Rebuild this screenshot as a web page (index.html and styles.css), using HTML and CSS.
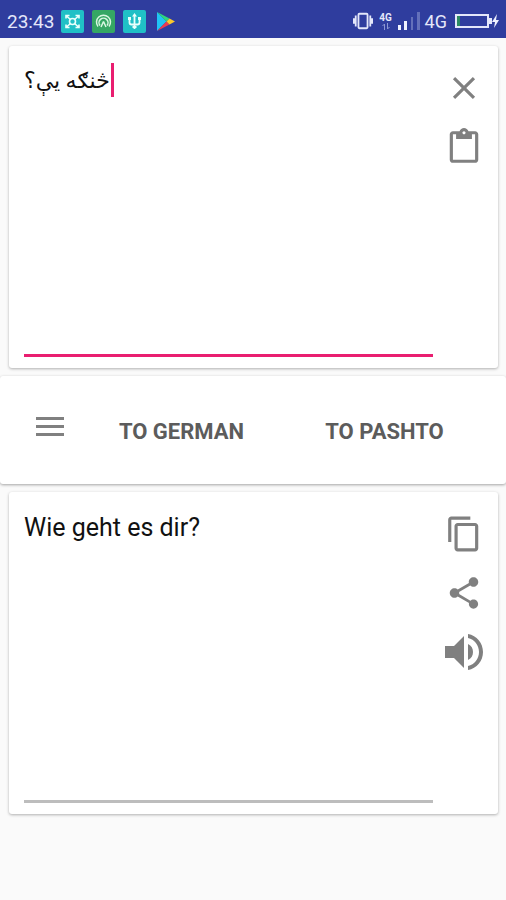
FILE: index.html
```html
<!DOCTYPE html>
<html lang="en">
<head>
    <meta charset="utf-8">
    <meta name="viewport" content="width=device-width, initial-scale=1">
    <title>Pashto German Translator</title>
    <link rel="stylesheet" href="styles.css">
</head>
<body>
<!-- status bar -->
<header class="status">
    <span class="clock">23:43</span>
    <div class="notices">
        <svg width="23" height="23" viewBox="0 0 23 23" fill="none" stroke="#e9fffc" stroke-width="1.6">
            <rect width="23" height="23" rx="2" fill="#20c0c6" stroke="none"/>
            <circle cx="11.5" cy="11.5" r="3"/>
            <path d="M5 8.500V5.500h3.500M18 8.500V5.500h-3.500M5 14.500v3h3.500M18 14.500v3h-3.500M6 6.500l3.500 3M17 6.500l-3.500 3M6 16.500l3.500-3M17 16.500l-3.500-3"/>
        </svg>
        <svg width="23" height="23" viewBox="0 0 23 23" fill="none" stroke="#d9f7e2" stroke-width="1.5">
            <rect width="23" height="23" rx="2" fill="#35a764" stroke="none"/>
            <path d="M6 16.500a7 7 0 1 1 11 0M8 15.500a4.500 4.500 0 1 1 7 0"/>
            <path d="M11.500 11.500l-2.500 5.500M11.500 11.500l2.500 5.500"/>
        </svg>
        <svg width="23" height="23" viewBox="0 0 23 23" fill="none" stroke="#e9fffc" stroke-width="1.8">
            <rect width="23" height="23" rx="2" fill="#20c0c6" stroke="none"/>
            <path d="M11.500 5v14M6.500 8v4.500q0 2 2 2h6q2 0 2-2V8"/>
            <path d="M11.500 3l2.500 3.500H9zM5 7h3v3H5zM15 7h3v3h-3zM9.500 16h4v2h-4z" fill="#e9fffc" stroke="none"/>
        </svg>
        <svg width="23" height="23" viewBox="0 0 23 23">
            <path d="M3 2v19l9.500-9.500z" fill="#20c4f4"/>
            <path d="M3 2l12.500 6.500-3 3z" fill="#2fd67c"/>
            <path d="M3 21l12.500-6.500-3-3z" fill="#ee3b4d"/>
            <path d="M15.500 8.500l5.500 3-5.500 3-3-3z" fill="#fbc92d"/>
        </svg>
    </div>
    <div class="signals">
        <svg width="22" height="20" viewBox="0 0 24 22" fill="none" stroke="#e4e7fa" stroke-width="2">
            <rect x="7" y="3" width="10" height="16" rx="1"/>
            <path d="M4 5v12M20 5v12M2 8v6M22 8v6"/>
        </svg>
        <span class="data">
            4G
            <svg width="10" height="7" viewBox="0 0 10 7" fill="none" stroke="#8d97d3">
                <path d="M3.500 7V1L1.500 3M6.500 0v6l2-2"/>
            </svg>
        </span>
        <svg width="23" height="22" viewBox="0 0 23 22">
            <path d="M0 15h3v5H0zM6 11h3v9H6z" fill="#f0f2ff"/>
            <path d="M13 7h2v13h-2zM19 2h3v18h-3z" fill="#6470ba"/>
        </svg>
        <span class="network">4G</span>
        <svg class="battery" width="45" height="20" viewBox="0 0 45 20">
            <rect x="1" y="4" width="32" height="12" fill="none" stroke="#e4e7fa" stroke-width="2"/>
            <path d="M34 7h3v6h-3z" fill="#e4e7fa"/>
            <path d="M2 5h3v10H2z" fill="#2c8a63"/>
            <path d="M42 3l-5 8h3l-1 6 5-8h-3z" fill="#f0f2ff"/>
        </svg>
    </div>
</header>

<main>
    <!-- text to translate -->
    <section class="card">
        <div class="field">
            <textarea class="text source" dir="rtl" lang="ps" aria-label="Text to translate" spellcheck="false">څنګه يې؟</textarea>
            <span class="caret"></span>
        </div>
        <div class="tools">
            <button class="tool" aria-label="Clear">
                <svg viewBox="0 0 24 24"><path d="M19 6.410L17.590 5 12 10.590 6.410 5 5 6.410 10.590 12 5 17.590 6.410 19 12 13.410 17.590 19 19 17.590 13.410 12z"/></svg>
            </button>
            <button class="tool" aria-label="Paste">
                <svg viewBox="0 0 24 24"><path d="M19 2h-4.180C14.400.84 13.300 0 12 0c-1.300 0-2.400.84-2.820 2H5c-1.100 0-2 .9-2 2v16c0 1.100.9 2 2 2h14c1.100 0 2-.9 2-2V4c0-1.100-.9-2-2-2zm-7 0c.55 0 1 .45 1 1s-.45 1-1 1-1-.45-1-1 .45-1 1-1zm7 18H5V4h2v3h10V4h2v16z"/></svg>
            </button>
        </div>
    </section>

    <nav class="bar">
        <button class="menu" aria-label="Menu">
            <svg width="28" height="26" viewBox="0 0 28 26"><path d="M0 1h28v3H0zM0 9h28v3H0zM0 17h28v3H0z"/></svg>
        </button>
        <button class="lang">TO GERMAN</button>
        <button class="lang">TO PASHTO</button>
    </nav>

    <!-- translation -->
    <section class="card">
        <div class="field">
            <textarea class="text result" lang="de" aria-label="Translation" spellcheck="false" readonly>Wie geht es dir?</textarea>
        </div>
        <div class="tools">
            <button class="tool" aria-label="Copy">
                <svg viewBox="0 0 24 24"><path d="M16 1H4c-1.100 0-2 .9-2 2v14h2V3h12V1zm3 4H8c-1.100 0-2 .9-2 2v14c0 1.100.9 2 2 2h11c1.100 0 2-.9 2-2V7c0-1.100-.9-2-2-2zm0 16H8V7h11v14z"/></svg>
            </button>
            <button class="tool" aria-label="Share">
                <svg viewBox="0 0 24 24"><path d="M18 16.080c-.76 0-1.440.3-1.960.77L8.910 12.700c.05-.23.09-.46.09-.7s-.04-.47-.09-.7l7.050-4.110c.54.5 1.250.81 2.040.81 1.660 0 3-1.340 3-3s-1.340-3-3-3-3 1.340-3 3c0 .24.04.47.09.7L8.040 9.810C7.500 9.310 6.790 9 6 9c-1.660 0-3 1.340-3 3s1.340 3 3 3c.79 0 1.500-.31 2.040-.81l7.120 4.160c-.05.21-.08.43-.08.65 0 1.610 1.310 2.920 2.920 2.920s2.920-1.310 2.920-2.920-1.310-2.920-2.920-2.920z"/></svg>
            </button>
            <button class="tool" aria-label="Listen">
                <svg viewBox="0 0 38 38"><path d="M0 13v12h9l10 10V3L9 13zM23 11v16c3.500-1.500 5-4.500 5-8s-1.500-6.500-5-8zM23 1v4c6.500 1.500 11 7.200 11 14s-4.500 12.500-11 14v4c8.800-1.600 15-9 15-18S31.800 2.600 23 1z"/></svg>
            </button>
        </div>
    </section>
</main>
</body>
</html>
```
FILE: styles.css
```css
body {
    margin: 0;
    background: #fafafa;
    font-family: Roboto, sans-serif;
}
button {
    padding: 0;
    border: none;
    background: none;
    font-family: inherit;
}
.status {
    display: flex;
    align-items: center;
    height: 38px;
    padding: 4px 6px 0 7px;
    box-sizing: border-box;
    background: #2f3d9e;
    color: #e4e7fa;
    font-size: 19px;
}
.notices {
    display: flex;
    gap: 8px;
    margin-left: 7px;
}
.signals {
    display: flex;
    align-items: center;
    gap: 4px;
    margin-left: auto;
}
.data {
    display: flex;
    flex-direction: column;
    align-items: center;
    width: 16px;
    font-size: 10px;
    font-weight: bold;
    line-height: 10px;
}
.network {
    font-size: 18px;
}
.battery {
    margin-left: 4px;
}
main {
    display: flex;
    flex-direction: column;
    gap: 8px;
    padding: 8px 0;
}
.card {
    display: flex;
    min-height: 322px;
    margin: 0 8px 0 9px;
    background: #fff;
    border-radius: 3px;
    box-shadow: 0 1px 3px rgba(0, 0, 0, .3);
}
.field {
    position: relative;
    display: flex;
    flex: 1;
    margin: 16px 0 11px 15px;
}
.text {
    flex: 1;
    min-width: 0;
    padding: 4px 0;
    box-sizing: border-box;
    border: none;
    border-bottom: 3px solid #bdbdbd;
    outline: none;
    resize: none;
    background: none;
    color: #111;
    font-family: Roboto, "DejaVu Sans", sans-serif;
    font-size: 25px;
    line-height: 32px;
    text-align: left;
}
.source {
    border-color: #e91e70;
    font-size: 22px;
    line-height: 30px;
}
.caret {
    position: absolute;
    top: 1px;
    left: 87px;
    width: 3px;
    height: 34px;
    background: #e91e70;
}
.tools {
    display: flex;
    flex-direction: column;
    width: 65px;
    padding: 12px 3px 0 0;
    box-sizing: border-box;
}
.tool {
    display: flex;
    align-items: center;
    justify-content: center;
    height: 59px;
}
.tool svg {
    width: 38px;
    height: 38px;
    fill: #808080;
}
.bar {
    display: flex;
    height: 108px;
    padding: 0 20px;
    background: #fff;
    border-radius: 3px;
    box-shadow: 0 1px 3px rgba(0, 0, 0, .35);
}
.menu {
    width: 60px;
}
.menu svg {
    fill: #808080;
}
.lang {
    flex: 1;
    padding-top: 2px;
    color: #5c5c5c;
    font-size: 22px;
    font-weight: bold;
}
```
